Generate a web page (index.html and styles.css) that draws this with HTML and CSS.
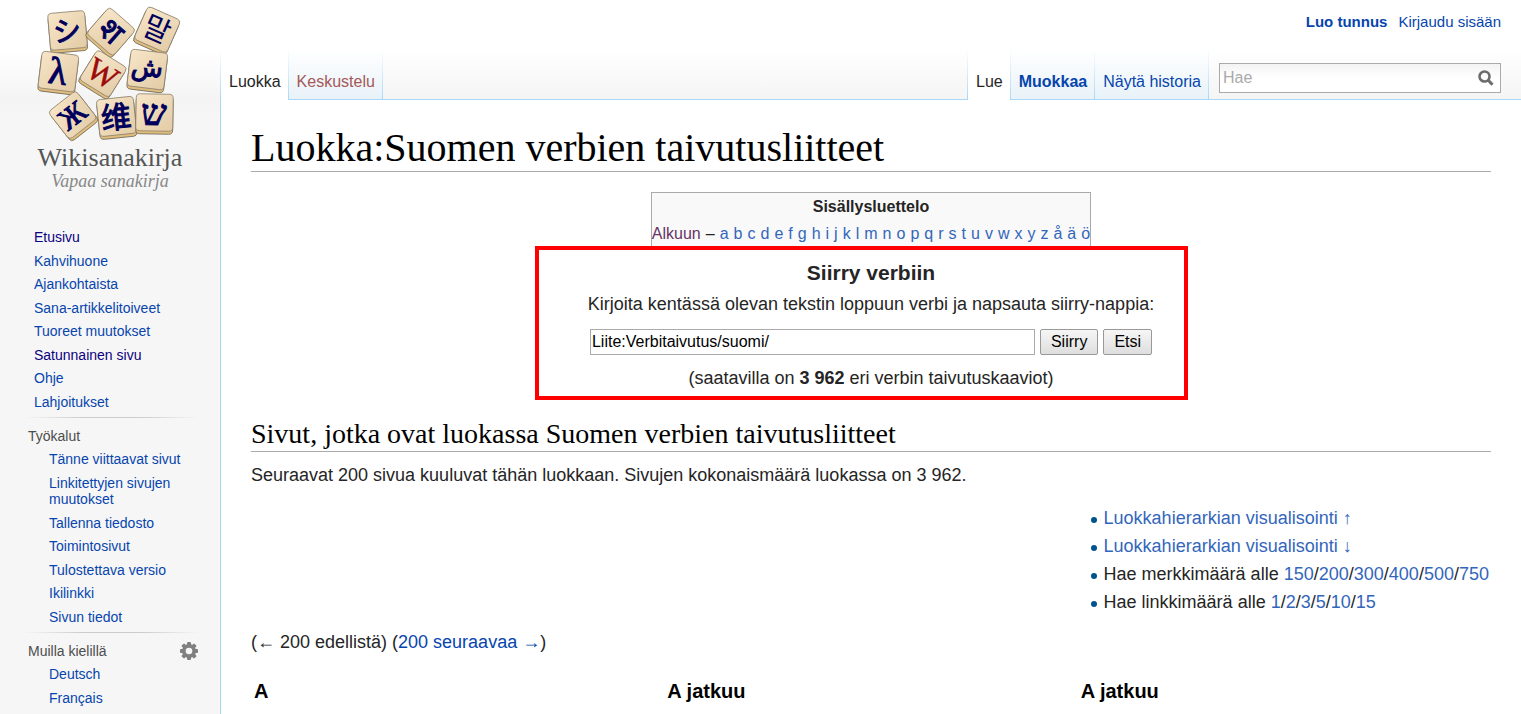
FILE: index.html
```html
<!DOCTYPE html>
<html lang="fi">
<head>
	<meta charset="utf-8">
	<title>Luokka:Suomen verbien taivutusliitteet – Wikisanakirja</title>
	<link rel="stylesheet" href="styles.css">
</head>
<body>
<div class="page">
	<aside class="sidebar">
		<a href="#" class="logo">
			<svg width="160" height="200" viewBox="30 0 160 200" role="img" aria-label="Wikisanakirja">
				<defs>
					<linearGradient id="wood" x1="0" y1="0" x2="1" y2="1">
						<stop offset="0" stop-color="#f7e6c8"/>
						<stop offset="1" stop-color="#e3cba6"/>
					</linearGradient>
					<g id="tile" stroke-width="0.8">
						<rect x="-18" y="-15" width="37" height="37" rx="4" fill="#e0bd7c" stroke="#6b6456"/>
						<rect x="-18" y="-18" width="37" height="37" rx="4" fill="url(#wood)" stroke="#8a7f6b"/>
					</g>
				</defs>
				<g class="glyph">
					<g transform="translate(67 30) rotate(-5)"><use href="#tile"/><text class="bold" y="11" font-size="28">シ</text></g>
					<g transform="translate(111 31) rotate(41) scale(.95)"><use href="#tile"/><text class="bold" y="11" font-size="33">श</text></g>
					<g transform="translate(157 29) rotate(24) scale(.97)"><use href="#tile"/><text y="11" font-size="30">말</text></g>
					<g transform="translate(58 71) rotate(7)"><use href="#tile"/><text class="serif bold" y="13" font-size="38">λ</text></g>
					<g transform="translate(103 73) rotate(32) scale(.95)"><use href="#tile"/><text class="serif red" y="12" font-size="34">W</text></g>
					<g transform="translate(147 69) rotate(7)"><use href="#tile"/><text class="bold" y="7" font-size="26">ش</text></g>
					<g transform="translate(72 115) rotate(-38) scale(.95)"><use href="#tile"/><text class="serif bold" y="11" font-size="31">Ж</text></g>
					<g transform="translate(116 116) rotate(-6)"><use href="#tile"/><text class="bold" y="12" font-size="30">维</text></g>
					<g transform="translate(154 112) rotate(1)"><use href="#tile"/><text class="serif bold" y="13" font-size="36">ש</text></g>
				</g>
				<text class="wordmark" x="110" y="166">Wikisanakirja</text>
				<text class="tagline" x="110" y="187">Vapaa sanakirja</text>
			</svg>
		</a>
		<nav class="portal first">
			<ul>
				<li><a href="#" class="visited">Etusivu</a></li>
				<li><a href="#">Kahvihuone</a></li>
				<li><a href="#">Ajankohtaista</a></li>
				<li><a href="#">Sana-artikkelitoiveet</a></li>
				<li><a href="#">Tuoreet muutokset</a></li>
				<li><a href="#" class="visited">Satunnainen sivu</a></li>
				<li><a href="#">Ohje</a></li>
				<li><a href="#">Lahjoitukset</a></li>
			</ul>
		</nav>
		<nav class="portal">
			<h3>Työkalut</h3>
			<ul>
				<li><a href="#">Tänne viittaavat sivut</a></li>
				<li><a href="#">Linkitettyjen sivujen muutokset</a></li>
				<li><a href="#">Tallenna tiedosto</a></li>
				<li><a href="#">Toimintosivut</a></li>
				<li><a href="#">Tulostettava versio</a></li>
				<li><a href="#">Ikilinkki</a></li>
				<li><a href="#">Sivun tiedot</a></li>
			</ul>
		</nav>
		<nav class="portal">
			<h3>Muilla kielillä
				<button type="button" class="gear" aria-label="Kieliasetukset">
					<svg width="18" height="18" viewBox="-9 -9 18 18">
						<g fill="#808080">
							<rect x="-2" y="-9" width="4" height="18" rx="1"/>
							<rect x="-2" y="-9" width="4" height="18" rx="1" transform="rotate(45)"/>
							<rect x="-2" y="-9" width="4" height="18" rx="1" transform="rotate(90)"/>
							<rect x="-2" y="-9" width="4" height="18" rx="1" transform="rotate(135)"/>
							<circle r="7"/>
						</g>
						<circle r="3.3" fill="#f6f6f6"/>
					</svg>
				</button>
			</h3>
			<ul>
				<li><a href="#">Deutsch</a></li>
				<li><a href="#">Français</a></li>
			</ul>
		</nav>
	</aside>

	<div class="main">
		<header class="head">
			<ul class="personal">
				<li><a href="#"><b>Luo tunnus</b></a></li>
				<li><a href="#">Kirjaudu sisään</a></li>
			</ul>
			<div class="bar">
				<ul class="tabs">
					<li class="selected"><a href="#">Luokka</a></li>
					<li><a href="#" class="new">Keskustelu</a></li>
				</ul>
				<ul class="tabs right">
					<li class="selected"><a href="#">Lue</a></li>
					<li><a href="#"><b>Muokkaa</b></a></li>
					<li><a href="#">Näytä historia</a></li>
				</ul>
				<form class="search">
					<input type="search" placeholder="Hae" aria-label="Hae">
					<button type="button" aria-label="Hae">
						<svg width="16" height="16" viewBox="0 0 16 16" fill="none" stroke="#6c6c6c">
							<circle cx="6.5" cy="6.5" r="5" stroke-width="2.6"/>
							<path d="M10 10l4.5 4.8" stroke-width="3"/>
						</svg>
					</button>
				</form>
			</div>
		</header>

		<main class="content">
			<h1>Luokka:Suomen verbien taivutusliitteet</h1>

			<div class="toc">
				<b>Sisällysluettelo</b>
				<div class="letters"><a href="#" class="seen">Alkuun</a> <span>–</span>
				<a href="#">a</a> <a href="#">b</a> <a href="#">c</a> <a href="#">d</a> <a href="#">e</a> <a href="#">f</a> <a href="#">g</a> <a href="#">h</a> <a href="#">i</a> <a href="#">j</a> <a href="#">k</a> <a href="#">l</a> <a href="#">m</a> <a href="#">n</a> <a href="#">o</a> <a href="#">p</a> <a href="#">q</a> <a href="#">r</a> <a href="#">s</a> <a href="#">t</a> <a href="#">u</a> <a href="#">v</a> <a href="#">w</a> <a href="#">x</a> <a href="#">y</a> <a href="#">z</a> <a href="#">å</a> <a href="#">ä</a> <a href="#">ö</a></div>
			</div>

			<div class="goto-wrap">
				<form class="goto">
					<h3>Siirry verbiin</h3>
					<label for="verb">Kirjoita kentässä olevan tekstin loppuun verbi ja napsauta siirry-nappia:</label>
					<div class="goto-row">
						<input type="text" id="verb" value="Liite:Verbitaivutus/suomi/">
						<button type="button">Siirry</button>
						<button type="button">Etsi</button>
					</div>
					<p>(saatavilla on <b>3 962</b> eri verbin taivutuskaaviot)</p>
				</form>
			</div>

			<h2>Sivut, jotka ovat luokassa Suomen verbien taivutusliitteet</h2>
			<p class="count">Seuraavat 200 sivua kuuluvat tähän luokkaan. Sivujen kokonaismäärä luokassa on 3 962.</p>

			<ul class="tools">
				<li><a href="#">Luokkahierarkian visualisointi ↑</a></li>
				<li><a href="#">Luokkahierarkian visualisointi ↓</a></li>
				<li>Hae merkkimäärä alle <a href="#">150</a>/<a href="#">200</a>/<a href="#">300</a>/<a href="#">400</a>/<a href="#">500</a>/<a href="#">750</a></li>
				<li>Hae linkkimäärä alle <a href="#">1</a>/<a href="#">2</a>/<a href="#">3</a>/<a href="#">5</a>/<a href="#">10</a>/<a href="#">15</a></li>
			</ul>

			<p class="pager">(← 200 edellistä) (<a href="#">200 seuraavaa →</a>)</p>

			<div class="columns">
				<h3>A</h3>
				<h3>A jatkuu</h3>
				<h3>A jatkuu</h3>
			</div>
		</main>
	</div>
</div>
</body>
</html>
```

FILE: styles.css
```css
* {
	box-sizing: border-box;
}
body {
	margin: 0;
	font-family: "Liberation Sans", Arial, sans-serif;
	font-size: 18px;
	line-height: 28px;
	color: #252525;
	background-color: #f6f6f6;
}
ul {
	list-style: none;
	margin: 0;
	padding: 0;
}
h1, h2, h3, p {
	margin: 0;
}
a {
	color: #0645ad;
	text-decoration: none;
}
a:hover {
	text-decoration: underline;
}
.page {
	display: grid;
	grid-template-columns: 220px 1fr;
	height: 100vh;
	overflow: hidden;
	background: linear-gradient(#fff 50px, #f4f4f4 100px, #f6f6f6 120px);
}

/* sidebar */
.logo {
	display: block;
	height: 200px;
	padding-left: 30px;
}
.logo svg {
	display: block;
}
.logo text {
	text-anchor: middle;
}
.glyph {
	fill: #00005c;
	font-family: "Noto Sans", "Noto Sans CJK SC", "DejaVu Sans", sans-serif;
}
.bold {
	stroke: #00005c;
	stroke-width: 1px;
}
.serif {
	font-family: "Liberation Serif", serif;
}
.red {
	fill: #9c0a0a;
	stroke: #9c0a0a;
	stroke-width: 0.5px;
}
.wordmark {
	fill: #555;
	font-family: "Liberation Serif", serif;
	font-size: 26px;
}
.tagline {
	fill: #888;
	font-family: "Liberation Serif", serif;
	font-size: 18px;
	font-style: italic;
}
.portal {
	margin: 0 20px 0 24px;
	padding-top: 10px;
	background: linear-gradient(to right, #f6f6f6, #ccc 33%, #ccc 66%, #f6f6f6) top / 100% 1px no-repeat;
}
.portal.first {
	padding: 29px 0 0 10px;
	background: none;
}
.portal ul {
	font-size: 14px;
	line-height: 1.18;
}
.portal li {
	padding-bottom: 7px;
}
.portal h3 {
	display: flex;
	justify-content: space-between;
	align-items: center;
	padding: 0 2px 6px 4px;
	font-size: 14px;
	font-weight: normal;
	line-height: 18px;
	color: #4d4d4d;
}
.portal h3 + ul {
	padding-left: 25px;
}
.portal .visited {
	color: #0b0080;
}
.gear {
	height: 18px;
	padding: 0;
	border: 0;
	background: none;
}
.gear svg {
	display: block;
}

/* header */
.main {
	min-width: 0;
}
.head {
	display: flex;
	flex-direction: column;
	justify-content: space-between;
	height: 100px;
	border-bottom: 1px solid #a7d7f9;
}
.personal {
	display: flex;
	justify-content: flex-end;
	gap: 11px;
	padding: 13px 20px 0 0;
	font-size: 15px;
	line-height: 18px;
}
.bar {
	display: flex;
	height: 50px;
	margin-bottom: -1px;
}
.tabs {
	display: flex;
	padding-left: 1px;
	background: linear-gradient(#fff, #a7d7f9) left / 1px 100% no-repeat;
}
.tabs.right {
	margin-left: auto;
}
.tabs li {
	padding: 18px 7px 0 8px;
	border-bottom: 1px solid #a7d7f9;
	border-right: 1px solid;
	border-image: linear-gradient(#fff, #a7d7f9) 1;
	background: linear-gradient(#fff, #e8f2f8);
	font-size: 16px;
	line-height: 28px;
}
.tabs .selected {
	border-bottom: 0;
	background: #fff;
}
.selected a {
	color: #252525;
}
.tabs .new {
	color: #a55858;
}
.search {
	display: flex;
	align-items: center;
	width: 282px;
	height: 30px;
	margin: 13px 20px 0 10px;
	padding-right: 6px;
	border: 1px solid #aaa;
	background: linear-gradient(#f3f3f3, #fff 50%);
}
.search input {
	flex: 1;
	min-width: 0;
	padding: 0 3px;
	border: 0;
	background: none;
	font: 16px "Liberation Sans", Arial, sans-serif;
}
.search input::placeholder {
	color: #aaa;
}
.search button {
	padding: 0;
	border: 0;
	background: none;
}
.search svg {
	display: block;
}

/* content */
.content {
	min-height: 100%;
	padding: 24px 30px 0;
	border-left: 1px solid #a7d7f9;
	background-color: #fff;
}
h1, h2 {
	border-bottom: 1px solid #aaa;
	color: #000;
	font-family: Georgia, "Liberation Serif", serif;
	font-weight: normal;
}
h1 {
	font-size: 40px;
	line-height: 47px;
}
h2 {
	margin-top: 16px;
	font-size: 28px;
	line-height: 35px;
}
.toc {
	width: max-content;
	margin: 20px auto 0;
	border: 1px solid #aaa;
	border-bottom: 0;
	background-color: #f9f9f9;
	font-size: 16px;
	line-height: 27px;
	text-align: center;
}
.letters {
	display: flex;
	gap: 5px;
}
.toc a, .tools a {
	color: #36b;
}
.toc .seen {
	color: #636;
}
.goto-wrap {
	display: flex;
	justify-content: center;
	padding-right: 20px;
}
.goto {
	width: 653px;
	margin-top: -1px;
	padding: 9px 0 4px 20px;
	border: 4px solid red;
	background-color: #fff;
	text-align: center;
}
.goto h3 {
	font-size: 21px;
	line-height: 28px;
}
.goto label {
	display: block;
	padding-top: 3px;
}
.goto-row {
	display: flex;
	justify-content: center;
	gap: 5px;
	margin: 11px 0 9px;
}
.goto-row input {
	width: 445px;
	height: 26px;
	padding: 1px;
	border: 1px solid #aaa;
	font: 16px "Liberation Sans", Arial, sans-serif;
	color: #000;
}
.goto-row button {
	height: 26px;
	padding: 0 10px;
	border: 1px solid #999;
	border-radius: 2px;
	background: linear-gradient(#f6f6f6, #dedede);
	font: 16px "Liberation Sans", Arial, sans-serif;
	color: #000;
}
.count {
	padding-top: 9px;
}
.tools {
	width: max-content;
	margin: 15px 2px 0 auto;
}
.tools li {
	display: flex;
	align-items: center;
	white-space: pre;
}
.tools li::before {
	content: "";
	width: 6px;
	height: 6px;
	margin: 3px 7px 0 0;
	border-radius: 50%;
	background-color: #00528c;
}
.pager {
	padding-top: 12px;
}
.columns {
	display: grid;
	grid-template-columns: repeat(3, 1fr);
	padding-top: 21px;
}
.columns h3 {
	padding-left: 3px;
	font-size: 20px;
	color: #000;
}
```
